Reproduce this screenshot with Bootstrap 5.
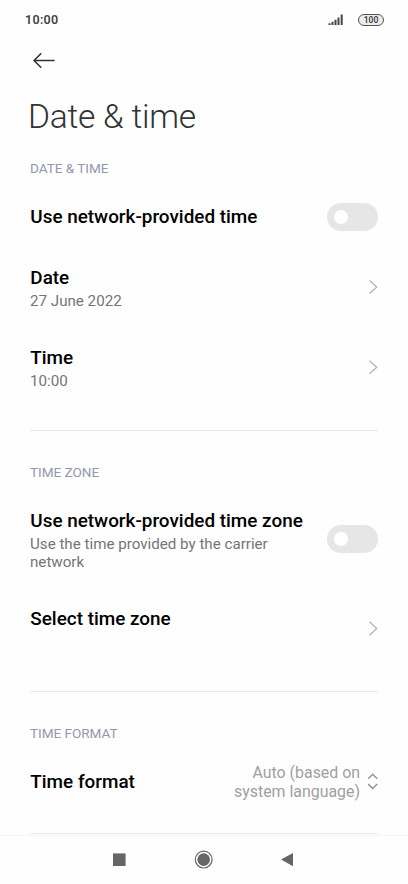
<!DOCTYPE html>
<html lang="en">
<head>
<meta charset="utf-8">
<meta name="viewport" content="width=device-width, initial-scale=1">
<title>Date &amp; time</title>
<link href="https://cdn.jsdelivr.net/npm/bootstrap@5.3.0/dist/css/bootstrap.min.css" rel="stylesheet">
<style>
body { font-family: Roboto, sans-serif; background: #fefefe; color: #000; }
svg { display: block; flex: none; }
.screen { height: 884px; }
.status { height: 39px; padding: 1px 24px 0 25px; font-size: 12.5px; font-weight: 600; color: #444; letter-spacing: .3px; }
.battery { width: 26px; height: 12px; border: 1px solid #555; border-radius: 6px; background: #ececec; font-size: 8.5px; font-weight: 500; line-height: 11px; letter-spacing: 0; color: #333; }
.signal { margin-right: 14px; }
.back { height: 43px; padding-left: 33px; }
.page-title { height: 69px; padding-left: 28px; font-size: 33.6px; font-weight: 300; line-height: 69px; letter-spacing: -.25px; color: #333; }
.pane { padding: 0 30px; }
.group-title { height: 35px; font-size: 13.6px; font-weight: 400; line-height: 35px; color: #9397b0; letter-spacing: -.05px; }
.item { height: 80px; }
.item-short { height: 61px; }
.item-tall { height: 98px; }
.labels { padding-top: 2px; }
.name { font-size: 18.9px; font-weight: 500; line-height: 23px; padding-left: .3px; }
.note { min-height: 18px; margin-top: 3px; font-size: 15.15px; line-height: 18px; color: #757575; }
.switch-track { width: 51px; height: 28px; padding-left: 7px; border-radius: 14px; background: #e6e6e6; flex: none; }
.switch-knob { width: 14px; height: 14px; background: #fff; }
.rule { height: 1px; background: #e9e9e9; }
.choice { font-size: 15.9px; line-height: 19px; color: #a0a0a0; }
.gap-before { padding-top: 23px; }
.gap-after { padding-top: 24px; }
.last-gap { padding-top: 21px; }
.keys { height: 49px; padding-right: 2px; border-top: 1px solid #f3f3f3; }
</style>
</head>
<body>
<div class="screen d-flex flex-column overflow-hidden">
  <header>
    <div class="status d-flex align-items-center justify-content-between">
      <span>10:00</span>
      <div class="d-flex align-items-center">
        <svg class="signal" width="16" height="12" viewBox="0 0 16 12" stroke="#444" stroke-width="2"><path d="M1.5 11V9.3M4.5 11V7.7M7.5 11V5.8M10.5 11V3.5M13.7 11V.5"/></svg>
        <div class="battery text-center">100</div>
      </div>
    </div>
    <div class="back d-flex align-items-center">
      <svg width="23" height="16" viewBox="0 0 23 16" fill="none" stroke="#333" stroke-width="1.6" stroke-linecap="round" stroke-linejoin="round"><path d="M21 7.5H1M7.8 .8L1 7.5l6.8 6.7"/></svg>
    </div>
    <h1 class="page-title m-0">Date &amp; time</h1>
  </header>
  <main class="pane flex-grow-1">
    <section>
      <h2 class="group-title m-0">DATE &amp; TIME</h2>
      <div class="item-short d-flex align-items-center justify-content-between">
        <div class="name">Use network-provided time</div>
        <div class="switch-track d-flex align-items-center"><div class="switch-knob rounded-circle"></div></div>
      </div>
      <div class="item d-flex align-items-center justify-content-between">
        <div class="labels"><div class="name">Date</div><div class="note">27 June 2022</div></div>
        <svg width="9" height="15" viewBox="0 0 9 15" fill="none" stroke="#b3b3b3" stroke-width="1.3"><path d="M.5 .5L7.7 7L.5 13.5"/></svg>
      </div>
      <div class="item d-flex align-items-center justify-content-between">
        <div class="labels"><div class="name">Time</div><div class="note">10:00</div></div>
        <svg width="9" height="15" viewBox="0 0 9 15" fill="none" stroke="#b3b3b3" stroke-width="1.3"><path d="M.5 .8L7.7 7.3L.5 13.8"/></svg>
      </div>
    </section>
    <div class="gap-before"><div class="rule"></div></div>
    <section class="gap-after">
      <h2 class="group-title m-0">TIME ZONE</h2>
      <div class="item-tall d-flex align-items-center justify-content-between">
        <div class="labels"><div class="name text-nowrap">Use network-provided time zone</div><div class="note">Use the time provided by the carrier<br>network</div></div>
        <div class="switch-track d-flex align-items-center"><div class="switch-knob rounded-circle"></div></div>
      </div>
      <div class="item d-flex align-items-center justify-content-between">
        <div class="labels"><div class="name">Select time zone</div><div class="note"></div></div>
        <svg width="9" height="15" viewBox="0 0 9 15" fill="none" stroke="#b3b3b3" stroke-width="1.3"><path d="M.5 .8L7.7 7.5L.5 14.2"/></svg>
      </div>
    </section>
    <div class="gap-before"><div class="rule"></div></div>
    <section class="gap-after">
      <h2 class="group-title m-0">TIME FORMAT</h2>
      <div class="item-short d-flex align-items-center justify-content-between">
        <div class="name">Time format</div>
        <div class="d-flex align-items-center gap-2">
          <div class="choice text-end">Auto (based on<br>system language)</div>
          <svg width="10" height="18" viewBox="0 0 10 18" fill="none" stroke="#929292" stroke-width="1.4"><path d="M.2 5.7L4.7 1.3L9.2 5.7M.2 11.1L4.7 15.5L9.2 11.1"/></svg>
        </div>
      </div>
    </section>
    <div class="last-gap"><div class="rule"></div></div>
  </main>
  <nav class="keys d-flex justify-content-center align-items-center">
    <svg width="180" height="20" viewBox="0 0 180 20" fill="#666"><rect x="0" y="3.4" width="12.6" height="12.6"/><circle cx="90.7" cy="9.6" r="6.3"/><circle cx="90.7" cy="9.6" r="8.4" fill="none" stroke="#666" stroke-width="1.2"/><path d="M168 9.6L180 3V16.2Z"/></svg>
  </nav>
</div>
<script src="https://cdn.jsdelivr.net/npm/bootstrap@5.3.0/dist/js/bootstrap.bundle.min.js"></script>
</body>
</html>
